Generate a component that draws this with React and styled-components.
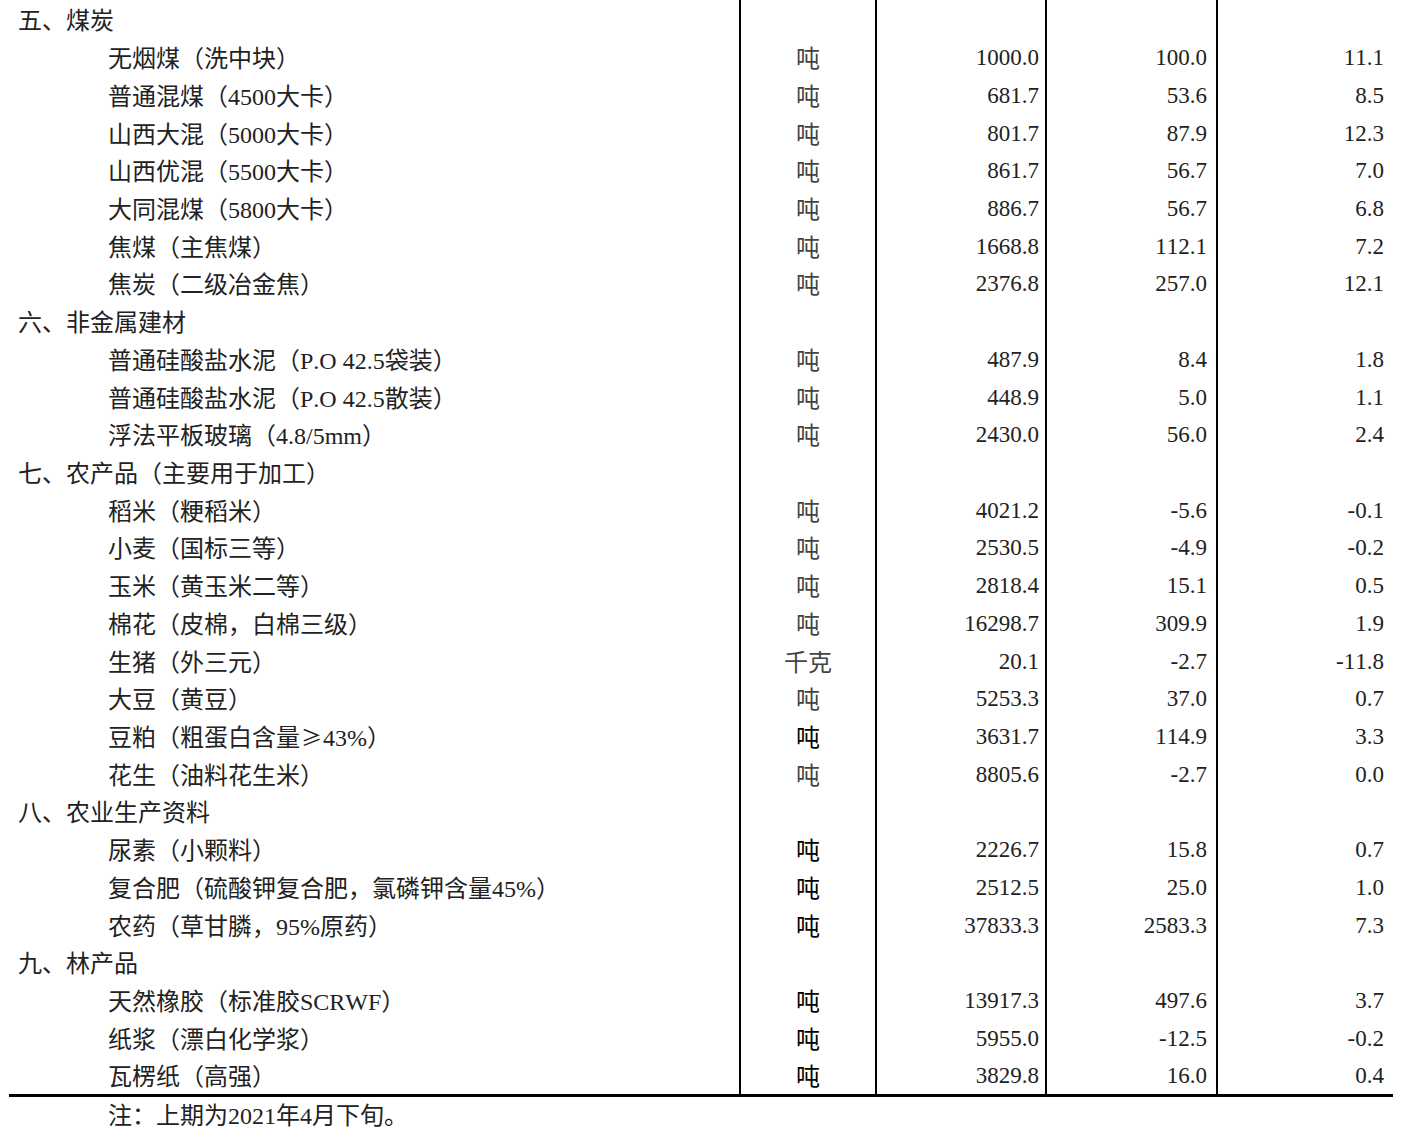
import styled, { createGlobalStyle } from "styled-components";

const GlobalStyle = createGlobalStyle`
  html, body {
    margin: 0;
    padding: 0;
    background: #fff;
  }
  body {
    font-family: "Liberation Serif", "Noto Sans CJK SC", serif;
    color: #222;
    text-spacing-trim: space-all;
    font-kerning: none;
  }
`;

const Page = styled.div`
  width: 1406px;
  padding-left: 9px;
  box-sizing: border-box;
`;

const Table = styled.div`
  width: 1384px;
  border-bottom: 3px solid #000;
`;

const Row = styled.div`
  display: grid;
  grid-template-columns: 732px 136px 170px 171px 175px;
  height: 37.72px;
  font-size: 23px;
`;

const Cell = styled.div`
  display: flex;
  align-items: center;
  box-sizing: border-box;
  border-right: ${(p) => (p.$last ? "none" : "2px solid #000")};
  white-space: nowrap;
`;

const NameCell = styled(Cell)`
  font-size: 24px;
  padding-left: ${(p) => (p.$category ? "9px" : "99px")};
`;

const UnitCell = styled(Cell)`
  justify-content: center;
  font-size: 24px;
  color: ${(p) => (p.$dark ? "#000" : "#444")};
`;

const NumCell = styled(Cell)`
  justify-content: flex-end;
  padding-top: 3px;
  padding-right: ${(p) => p.$pad}px;
`;

const Sym = styled.span`
  font-family: "Noto Sans CJK SC", sans-serif;
  font-size: 21px;
  margin: 0 1px;
`;

const Note = styled.div`
  padding-left: 99px;
  margin-top: 4px;
  font-size: 24px;
  line-height: 30px;
`;

const rows = [
  ["五、煤炭"],
  ["无烟煤（洗中块）", "吨", "1000.0", "100.0", "11.1"],
  ["普通混煤（4500大卡）", "吨", "681.7", "53.6", "8.5"],
  ["山西大混（5000大卡）", "吨", "801.7", "87.9", "12.3"],
  ["山西优混（5500大卡）", "吨", "861.7", "56.7", "7.0"],
  ["大同混煤（5800大卡）", "吨", "886.7", "56.7", "6.8"],
  ["焦煤（主焦煤）", "吨", "1668.8", "112.1", "7.2"],
  ["焦炭（二级冶金焦）", "吨", "2376.8", "257.0", "12.1"],
  ["六、非金属建材"],
  ["普通硅酸盐水泥（P.O 42.5袋装）", "吨", "487.9", "8.4", "1.8"],
  ["普通硅酸盐水泥（P.O 42.5散装）", "吨", "448.9", "5.0", "1.1"],
  ["浮法平板玻璃（4.8/5mm）", "吨", "2430.0", "56.0", "2.4"],
  ["七、农产品（主要用于加工）"],
  ["稻米（粳稻米）", "吨", "4021.2", "-5.6", "-0.1"],
  ["小麦（国标三等）", "吨", "2530.5", "-4.9", "-0.2"],
  ["玉米（黄玉米二等）", "吨", "2818.4", "15.1", "0.5"],
  ["棉花（皮棉，白棉三级）", "吨", "16298.7", "309.9", "1.9"],
  ["生猪（外三元）", "千克", "20.1", "-2.7", "-11.8"],
  ["大豆（黄豆）", "吨", "5253.3", "37.0", "0.7"],
  [<>豆粕（粗蛋白含量<Sym>≥</Sym>43%）</>, "吨", "3631.7", "114.9", "3.3", true],
  ["花生（油料花生米）", "吨", "8805.6", "-2.7", "0.0"],
  ["八、农业生产资料"],
  ["尿素（小颗料）", "吨", "2226.7", "15.8", "0.7", true],
  ["复合肥（硫酸钾复合肥，氯磷钾含量45%）", "吨", "2512.5", "25.0", "1.0", true],
  ["农药（草甘膦，95%原药）", "吨", "37833.3", "2583.3", "7.3", true],
  ["九、林产品"],
  ["天然橡胶（标准胶SCRWF）", "吨", "13917.3", "497.6", "3.7", true],
  ["纸浆（漂白化学浆）", "吨", "5955.0", "-12.5", "-0.2", true],
  ["瓦楞纸（高强）", "吨", "3829.8", "16.0", "0.4", true],
];

const App = () => {
  return (
    <Page>
      <GlobalStyle />
      <Table>
        {rows.map((r, i) => {
          const category = r.length === 1;
          return (
            <Row key={i}>
              <NameCell $category={category}>{r[0]}</NameCell>
              <UnitCell $dark={r[5]}>{r[1]}</UnitCell>
              <NumCell $pad={6}>{r[2]}</NumCell>
              <NumCell $pad={9}>{r[3]}</NumCell>
              <NumCell $pad={9} $last>{r[4]}</NumCell>
            </Row>
          );
        })}
      </Table>
      <Note>注：上期为2021年4月下旬。</Note>
    </Page>
  );
};

export default App;
